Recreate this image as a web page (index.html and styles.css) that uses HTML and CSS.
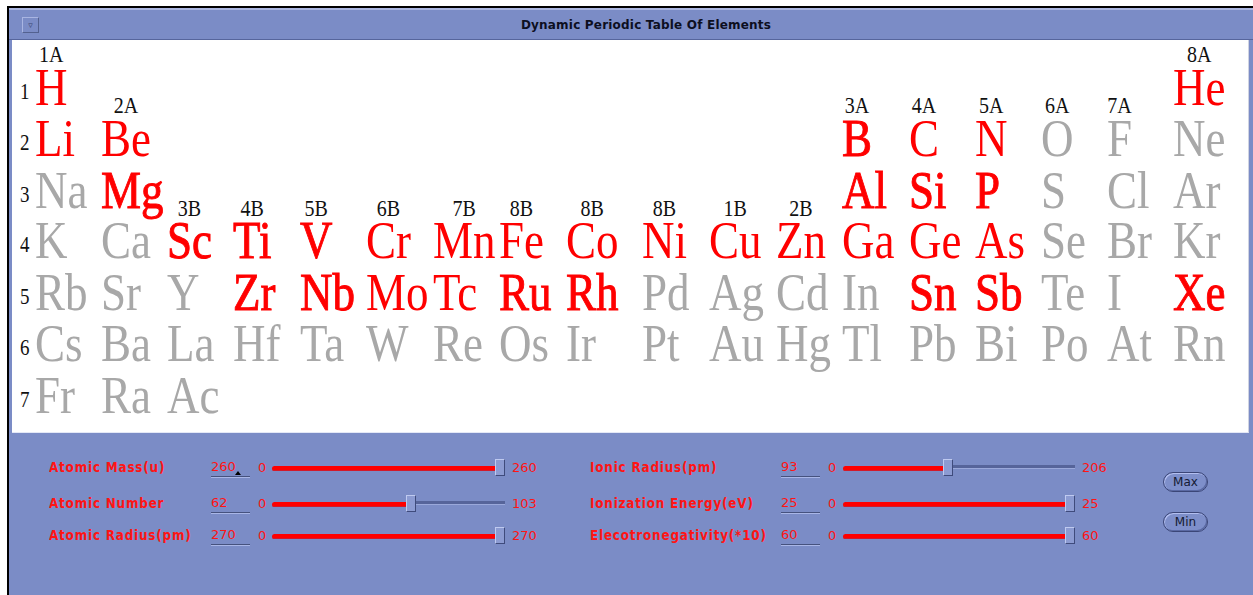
FILE: index.html
```html
<!DOCTYPE html>
<html>
<head lang="en">
    <meta charset="UTF-8">
    <title>Dynamic Periodic Table Of Elements</title>
    <link rel="stylesheet" href="styles.css">
</head>
<body>
<div id="window">
    <div id="titlebar">
        <span id="menu">&#9663;</span>
        <span id="title">Dynamic Periodic Table Of Elements</span>
    </div>

    <div id="table">
        <div id="grid">
            <div class="num r1">1</div>
            <div class="num r2">2</div>
            <div class="num r3">3</div>
            <div class="num r4">4</div>
            <div class="num r5">5</div>
            <div class="num r6">6</div>
            <div class="num r7">7</div>

            <!-- row 1 -->
            <div class="el on r1 c1"><span class="grp">1A</span>H</div>
            <div class="el on r1 c18"><span class="grp">8A</span>He</div>

            <!-- row 2 -->
            <div class="el on r2 c1">Li</div>
            <div class="el on r2 c2"><span class="grp">2A</span>Be</div>
            <div class="el on b r2 c13"><span class="grp">3A</span>B</div>
            <div class="el on r2 c14"><span class="grp">4A</span>C</div>
            <div class="el on r2 c15"><span class="grp">5A</span>N</div>
            <div class="el r2 c16"><span class="grp">6A</span>O</div>
            <div class="el r2 c17"><span class="grp">7A</span>F</div>
            <div class="el r2 c18">Ne</div>

            <!-- row 3 -->
            <div class="el r3 c1">Na</div>
            <div class="el on b r3 c2">Mg</div>
            <div class="el on b r3 c13">Al</div>
            <div class="el on b r3 c14">Si</div>
            <div class="el on b r3 c15">P</div>
            <div class="el r3 c16">S</div>
            <div class="el r3 c17">Cl</div>
            <div class="el r3 c18">Ar</div>

            <!-- row 4 -->
            <div class="el r4 c1">K</div>
            <div class="el r4 c2">Ca</div>
            <div class="el on b r4 c3"><span class="grp">3B</span>Sc</div>
            <div class="el on b r4 c4"><span class="grp">4B</span>Ti</div>
            <div class="el on b r4 c5"><span class="grp">5B</span>V</div>
            <div class="el on r4 c6"><span class="grp">6B</span>Cr</div>
            <div class="el on r4 c7"><span class="grp">7B</span>Mn</div>
            <div class="el on r4 c8"><span class="grp">8B</span>Fe</div>
            <div class="el on r4 c9"><span class="grp">8B</span>Co</div>
            <div class="el on r4 c10"><span class="grp">8B</span>Ni</div>
            <div class="el on r4 c11"><span class="grp">1B</span>Cu</div>
            <div class="el on r4 c12"><span class="grp">2B</span>Zn</div>
            <div class="el on r4 c13">Ga</div>
            <div class="el on r4 c14">Ge</div>
            <div class="el on r4 c15">As</div>
            <div class="el r4 c16">Se</div>
            <div class="el r4 c17">Br</div>
            <div class="el r4 c18">Kr</div>

            <!-- row 5 -->
            <div class="el r5 c1">Rb</div>
            <div class="el r5 c2">Sr</div>
            <div class="el r5 c3">Y</div>
            <div class="el on b r5 c4">Zr</div>
            <div class="el on b r5 c5">Nb</div>
            <div class="el on r5 c6">Mo</div>
            <div class="el on r5 c7">Tc</div>
            <div class="el on b r5 c8">Ru</div>
            <div class="el on b r5 c9">Rh</div>
            <div class="el r5 c10">Pd</div>
            <div class="el r5 c11">Ag</div>
            <div class="el r5 c12">Cd</div>
            <div class="el r5 c13">In</div>
            <div class="el on b r5 c14">Sn</div>
            <div class="el on b r5 c15">Sb</div>
            <div class="el r5 c16">Te</div>
            <div class="el r5 c17">I</div>
            <div class="el on b r5 c18">Xe</div>

            <!-- row 6 -->
            <div class="el r6 c1">Cs</div>
            <div class="el r6 c2">Ba</div>
            <div class="el r6 c3">La</div>
            <div class="el r6 c4">Hf</div>
            <div class="el r6 c5">Ta</div>
            <div class="el r6 c6">W</div>
            <div class="el r6 c7">Re</div>
            <div class="el r6 c8">Os</div>
            <div class="el r6 c9">Ir</div>
            <div class="el r6 c10">Pt</div>
            <div class="el r6 c11">Au</div>
            <div class="el r6 c12">Hg</div>
            <div class="el r6 c13">Tl</div>
            <div class="el r6 c14">Pb</div>
            <div class="el r6 c15">Bi</div>
            <div class="el r6 c16">Po</div>
            <div class="el r6 c17">At</div>
            <div class="el r6 c18">Rn</div>

            <!-- row 7 -->
            <div class="el r7 c1">Fr</div>
            <div class="el r7 c2">Ra</div>
            <div class="el r7 c3">Ac</div>
        </div>
    </div>

    <div id="controls">
        <div class="group left">
            <span class="lbl">Atomic Mass(u)</span>
            <span class="field">260<i class="caret"></i></span>
            <span class="min">0</span>
            <div class="slider"><i class="fill" style="width:223px"></i><i class="thumb"></i><i class="rest"></i></div>
            <span class="max">260</span>

            <span class="lbl">Atomic Number</span>
            <span class="field">62</span>
            <span class="min">0</span>
            <div class="slider"><i class="fill" style="width:134px"></i><i class="thumb"></i><i class="rest"></i></div>
            <span class="max">103</span>

            <span class="lbl">Atomic Radius(pm)</span>
            <span class="field">270</span>
            <span class="min">0</span>
            <div class="slider"><i class="fill" style="width:223px"></i><i class="thumb"></i><i class="rest"></i></div>
            <span class="max">270</span>
        </div>

        <div class="group right">
            <span class="lbl">Ionic Radius(pm)</span>
            <span class="field">93</span>
            <span class="min">0</span>
            <div class="slider"><i class="fill" style="width:100px"></i><i class="thumb"></i><i class="rest"></i></div>
            <span class="max">206</span>

            <span class="lbl">Ionization Energy(eV)</span>
            <span class="field">25</span>
            <span class="min">0</span>
            <div class="slider"><i class="fill" style="width:222px"></i><i class="thumb"></i><i class="rest"></i></div>
            <span class="max">25</span>

            <span class="lbl">Elecotronegativity(*10)</span>
            <span class="field">60</span>
            <span class="min">0</span>
            <div class="slider"><i class="fill" style="width:222px"></i><i class="thumb"></i><i class="rest"></i></div>
            <span class="max">60</span>
        </div>

        <div id="buttons">
            <span class="btn">Max</span>
            <span class="btn">Min</span>
        </div>
    </div>
</div>
</body>
</html>
```

FILE: styles.css
```css
* {
    margin: 0;
    padding: 0;
}

body {
    background-color: #fff;
    overflow: hidden;
}

i {
    display: block;
}

#window {
    width: 1246px;
    height: 589px;
    margin: 6px 0 0 7px;
    border-top: 2px solid #000;
    border-left: 2px solid #000;
    background-color: #7b8cc6;
    box-sizing: border-box;
}

/* title bar */
#titlebar {
    display: flex;
    align-items: center;
    height: 29px;
    border-top: 2px solid #aab5e0;
    border-bottom: 1px solid #56659c;
}

#menu {
    width: 15px;
    height: 14px;
    margin-left: 13px;
    border: 1px solid;
    border-color: #a9b5e2 #53618f #53618f #a9b5e2;
    font: 9px/14px "DejaVu Sans", sans-serif;
    color: #3a4570;
    text-align: center;
}

#title {
    flex: 1;
    text-align: center;
    font: bold 12px "DejaVu Sans", sans-serif;
    letter-spacing: 0.2px;
    color: #0d0f1f;
}

/* table */
#table {
    height: 393px;
    margin: 0 4px 0 3px;
    background-color: #fff;
    border-right: 1px solid #cfd3e2;
    border-bottom: 1px solid #e4e8f6;
    box-sizing: border-box;
}

#grid {
    display: grid;
    grid-template-columns: 23px 66px 66px 66px 67px 66px 67px 66px 67px 76px 67px 67px 66px 67px 66px 66px 66px 66px 1fr;
    grid-template-rows: repeat(7, 43.5px);
    padding-top: 18px;
    transform: scaleY(1.18); /*the original is stretched upward*/
    transform-origin: 0 0;
}

.num {
    grid-column: 1;
    padding: 3.5px 0 0 8px;
    font: 19px/43.5px "Liberation Serif", serif;
    color: #111;
}

.el {
    justify-self: start;
    align-self: end;
    position: relative;
    margin-bottom: 4.75px;
    font: 45px/34px "Liberation Serif", serif;
    color: #a8a8a8;
    white-space: nowrap;
}

.el.on {
    color: #ff0000;
}

.el.b {
    -webkit-text-stroke: 0.8px #ff0000; /*slightly heavier, same width*/
}

.grp {
    position: absolute;
    left: 0;
    right: 0;
    bottom: calc(100% + 3.25px);
    text-align: center;
    font: 20px/16px "Liberation Serif", serif;
    color: #111;
    -webkit-text-stroke: 0;
}

.c1 { grid-column: 2; }
.c2 { grid-column: 3; }
.c3 { grid-column: 4; }
.c4 { grid-column: 5; }
.c5 { grid-column: 6; }
.c6 { grid-column: 7; }
.c7 { grid-column: 8; }
.c8 { grid-column: 9; }
.c9 { grid-column: 10; }
.c10 { grid-column: 11; }
.c11 { grid-column: 12; }
.c12 { grid-column: 13; }
.c13 { grid-column: 14; }
.c14 { grid-column: 15; }
.c15 { grid-column: 16; }
.c16 { grid-column: 17; }
.c17 { grid-column: 18; }
.c18 { grid-column: 19; }

.r1 { grid-row: 1; }
.r2 { grid-row: 2; }
.r3 { grid-row: 3; }
.r4 { grid-row: 4; }
.r5 { grid-row: 5; }
.r6 { grid-row: 6; }
.r7 { grid-row: 7; }

/* sliders */
#controls {
    display: flex;
    padding: 16px 0 0 40px;
}

.group {
    display: grid;
    grid-template-rows: 36px 36px 28px;
    align-items: center;
    font: 13px "DejaVu Sans", sans-serif;
    color: #ff1414;
}

.group.left {
    grid-template-columns: 162px 39px 22px 233px 85px;
}

.group.right {
    grid-template-columns: 191px 39px 23px 232px 88px;
}

.lbl {
    font: bold 12px "DejaVu Sans", sans-serif;
    letter-spacing: 0.8px;
    transform: scaleY(1.22);
    transform-origin: 0 60%;
}

.field {
    position: relative;
    height: 19px;
    line-height: 19px;
    border-bottom: 1px solid #46527e;
    box-shadow: 0 1px 0 #a9b6e6;
}

.caret {
    position: absolute;
    left: 24px;
    bottom: 1px;
    border-left: 3px solid transparent;
    border-right: 3px solid transparent;
    border-bottom: 4px solid #000;
}

.min {
    padding-left: 8px;
}

.max {
    padding-left: 7px;
}

.slider {
    display: flex;
    align-items: center;
    height: 18px;
}

.fill {
    height: 5px;
    margin-top: 3px;
    background-color: #ff0000;
    border-radius: 3px 0 0 3px;
    box-shadow: inset 0 -1px 0 #d21a2a;
}

.thumb {
    width: 8px;
    height: 15px;
    background-color: #8c9bd2;
    border: 1px solid;
    border-color: #bfcaf0 #3f4b7c #3f4b7c #bfcaf0;
}

.rest {
    flex: 1;
    height: 3px;
    background-color: #56649a;
    border-bottom: 1px solid #9aa8da;
}

/* buttons */
#buttons {
    display: flex;
    flex-direction: column;
    gap: 20px;
    padding-top: 23px;
}

.btn {
    width: 43px;
    height: 18px;
    border: 1px solid #3b4677;
    border-radius: 10px;
    background-color: #7e8fca;
    box-shadow: inset 1px 1px 0 #b3bff0, inset -1px -1px 0 #5a69a3;
    font: 12px/18px "DejaVu Sans", sans-serif;
    color: #141a33;
    text-align: center;
}
```
